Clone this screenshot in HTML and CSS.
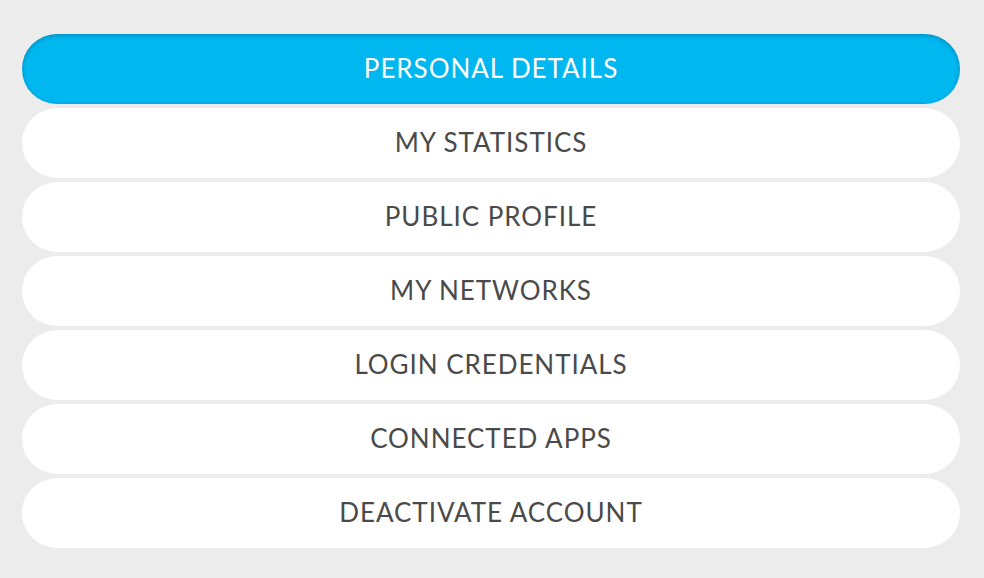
FILE: index.html
```html
<!DOCTYPE html>
<html>
<head>
<meta charset="utf-8">
<link rel="stylesheet" href="styles.css">
</head>
<body>
<nav class="menu">
  <a class="item active">PERSONAL DETAILS</a>
  <a class="item">MY STATISTICS</a>
  <a class="item">PUBLIC PROFILE</a>
  <a class="item">MY NETWORKS</a>
  <a class="item">LOGIN CREDENTIALS</a>
  <a class="item">CONNECTED APPS</a>
  <a class="item">DEACTIVATE ACCOUNT</a>
</nav>
</body>
</html>
```
FILE: styles.css
```css
html, body {
  margin: 0;
  padding: 0;
  background: #ececec;
  width: 984px;
  height: 578px;
  overflow: hidden;
}
.menu {
  display: flex;
  flex-direction: column;
  gap: 4px;
  padding: 34px 24px 0 22px;
}
.item {
  display: flex;
  align-items: center;
  justify-content: center;
  height: 70px;
  border-radius: 35px;
  background: #ffffff;
  color: #4a4a4a;
  font-family: Lato, "Noto Sans", sans-serif;
  font-size: 26px;
  letter-spacing: 0.95px;
  padding-bottom: 2px;
  box-sizing: border-box;
}
.item.active {
  background: #00b7ef;
  color: #ffffff;
  box-shadow: inset 0 2px 4px rgba(0, 60, 100, 0.25), inset 0 0 3px rgba(0, 60, 100, 0.15);
}
```
